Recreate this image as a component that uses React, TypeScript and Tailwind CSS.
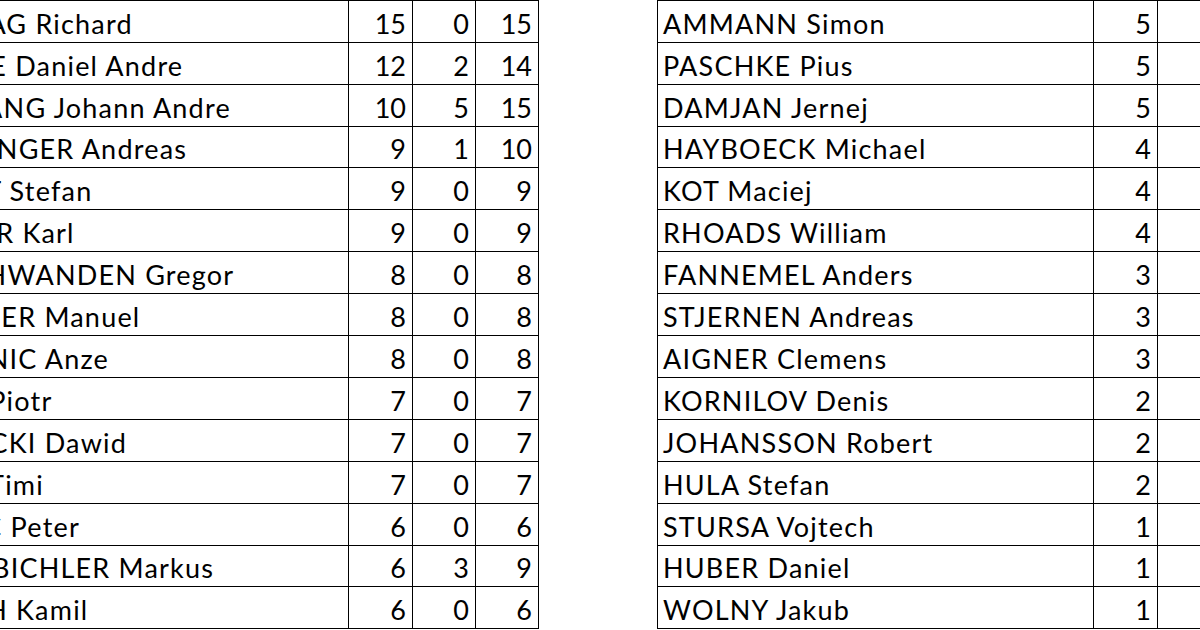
import React from 'react';

// linke Tabelle: Name, Spalte A, Spalte B, Summe
const leftRows: [string, number, number, number][] = [
  ['FREITAG Richard', 15, 0, 15],
  ['TANDE Daniel Andre', 12, 2, 14],
  ['FORFANG Johann Andre', 10, 5, 15],
  ['WELLINGER Andreas', 9, 1, 10],
  ['KRAFT Stefan', 9, 0, 9],
  ['GEIGER Karl', 9, 0, 9],
  ['DESCHWANDEN Gregor', 8, 0, 8],
  ['FETTNER Manuel', 8, 0, 8],
  ['SEMENIC Anze', 8, 0, 8],
  ['ZYLA Piotr', 7, 0, 7],
  ['KUBACKI Dawid', 7, 0, 7],
  ['ZAJC Timi', 7, 0, 7],
  ['PREVC Peter', 6, 0, 6],
  ['EISENBICHLER Markus', 6, 3, 9],
  ['STOCH Kamil', 6, 0, 6],
];

const rightRows: [string, number][] = [
  ['AMMANN Simon', 5],
  ['PASCHKE Pius', 5],
  ['DAMJAN Jernej', 5],
  ['HAYBOECK Michael', 4],
  ['KOT Maciej', 4],
  ['RHOADS William', 4],
  ['FANNEMEL Anders', 3],
  ['STJERNEN Andreas', 3],
  ['AIGNER Clemens', 3],
  ['KORNILOV Denis', 2],
  ['JOHANSSON Robert', 2],
  ['HULA Stefan', 2],
  ['STURSA Vojtech', 1],
  ['HUBER Daniel', 1],
  ['WOLNY Jakub', 1],
];

// Zeilen 4 und 14 sind einen Pixel niedriger
const rowH = (i: number) => (i === 3 || i === 13 ? 'h-[41px]' : 'h-[42px]');

const NumCell = ({ v, w }: { v: number; w: string }) => (
  <div className={`${w} shrink-0 border-r border-black flex items-end justify-end pr-[6px] pb-[5px] tracking-[1px]`}>
    <span className="tracking-normal">{v}</span>
  </div>
);

export default function App() {
  return (
    <div
      className="w-[1200px] h-[630px] overflow-hidden bg-white text-black text-[27px] leading-none"
      style={{ fontFamily: 'Lato, "Open Sans", sans-serif' }}
    >
      <div className="flex ml-[-88px]">
        <div className="border-t border-black shrink-0">
          {leftRows.map(([name, a, b, s], i) => (
            <div key={name} className={`flex ${rowH(i)} border-b border-black`}>
              <div className="w-[437px] shrink-0 border-r border-black flex items-end pb-[5px] whitespace-nowrap tracking-[1.2px]">
                {name}
              </div>
              <NumCell v={a} w="w-[64px]" />
              <NumCell v={b} w="w-[63px]" />
              <NumCell v={s} w="w-[63px]" />
            </div>
          ))}
        </div>
        <div className="w-[118px] shrink-0" />
        <div className="border-t border-black shrink-0 border-l">
          {rightRows.map(([name, v], i) => (
            <div key={name} className={`flex ${rowH(i)} border-b border-black`}>
              <div className="w-[436px] shrink-0 border-r border-black flex items-end pl-[5px] pb-[5px] whitespace-nowrap tracking-[1.2px]">
                {name}
              </div>
              <NumCell v={v} w="w-[64px]" />
              <div className="w-[63px] shrink-0 border-r border-black" />
            </div>
          ))}
        </div>
      </div>
    </div>
  );
}
